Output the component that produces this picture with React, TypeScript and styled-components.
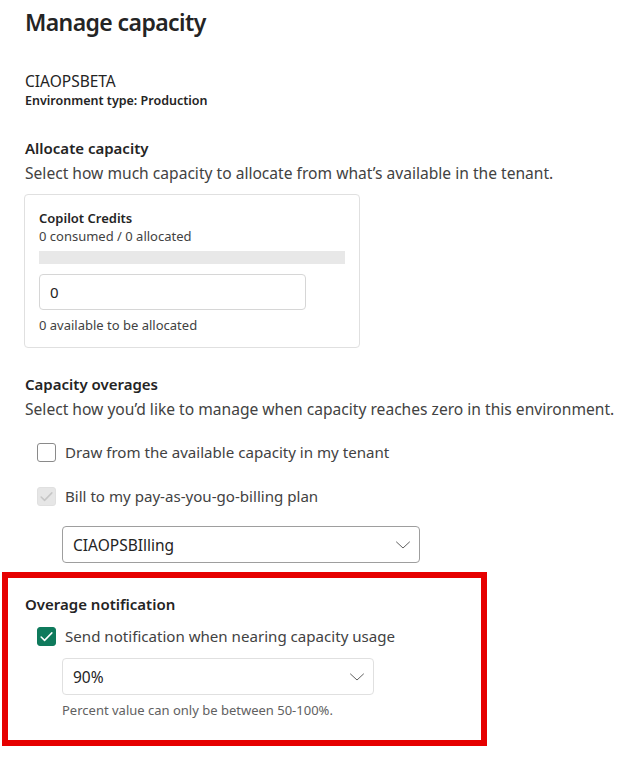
import React from 'react';
import styled, { createGlobalStyle } from 'styled-components';

const GlobalStyle = createGlobalStyle`
  * { box-sizing: border-box; }
  body {
    margin: 0;
    background: #ffffff;
    color: #242424;
    font-family: "Noto Sans", "Open Sans", sans-serif;
  }
`;

const Page = styled.main`
  width: 634px;
  padding: 6px 0 0 25px;
`;

const Title = styled.h1`
  margin: 0;
  font-size: 23px;
  font-weight: 600;
  letter-spacing: -0.6px;
  line-height: 32px;
`;

const EnvName = styled.div`
  margin-top: 33px;
  font-size: 15.5px;
  font-weight: 400;
  line-height: 20px;
`;

const EnvType = styled.div`
  margin-top: 1px;
  font-size: 12.5px;
  font-weight: 600;
  line-height: 18px;
`;

const SectionTitle = styled.h2<{ $gap: number }>`
  margin: ${(p) => p.$gap}px 0 0;
  font-size: 15px;
  font-weight: 600;
  line-height: 22px;
`;

const SectionText = styled.p`
  margin: 3px 0 0;
  font-size: 15.6px;
  line-height: 22px;
  color: #424242;
`;

const Card = styled.section`
  width: 336px;
  margin: 10px 0 0 -1px;
  padding: 14px 14px 13px 14px;
  border: 1px solid #e0e0e0;
  border-radius: 4px;
`;

const CardTitle = styled.div`
  font-size: 13px;
  font-weight: 600;
  line-height: 18px;
`;

const Muted = styled.div`
  font-size: 13px;
  line-height: 18px;
  color: #424242;
`;

const Bar = styled.div`
  margin-top: 6px;
  height: 13px;
  background: #e8e8e8;
`;

const NumberInput = styled.input`
  display: block;
  width: 267px;
  height: 36px;
  margin: 10px 0 6px;
  padding: 0 10px;
  border: 1px solid #d6d6d6;
  border-radius: 4px;
  font: inherit;
  font-size: 15px;
  color: #242424;
  outline: none;
`;

const Options = styled.div<{ $top: number }>`
  display: flex;
  flex-direction: column;
  gap: 24px;
  margin: ${(p) => p.$top}px 0 0 12px;
`;

const OptionRow = styled.label`
  display: flex;
  align-items: center;
  gap: 9px;
  font-size: 15.1px;
  line-height: 20px;
  color: #424242;
`;

type BoxState = 'empty' | 'disabled' | 'checked';

const Box = styled.span<{ $state: BoxState }>`
  flex: none;
  width: 19px;
  height: 19px;
  border-radius: 3px;
  display: flex;
  align-items: center;
  justify-content: center;
  border: 1px solid
    ${(p) => (p.$state === 'empty' ? '#8a8a8a' : p.$state === 'disabled' ? '#e0e0e0' : '#0f7a5c')};
  background: ${(p) => (p.$state === 'empty' ? '#fff' : p.$state === 'disabled' ? '#e6e6e6' : '#0f7a5c')};
  color: ${(p) => (p.$state === 'checked' ? '#fff' : '#c6c6c6')};
`;

const Select = styled.div<{ $width: number; $border: string }>`
  width: ${(p) => p.$width}px;
  height: 37px;
  display: flex;
  align-items: center;
  justify-content: space-between;
  padding: 0 8px 0 10px;
  border: 1px solid ${(p) => p.$border};
  border-radius: 4px;
  font-size: 15.5px;
  color: #242424;
`;

const Indented = styled.div<{ $top: number }>`
  margin: ${(p) => p.$top}px 0 0 37px;
`;

const Highlight = styled.section`
  width: 485px;
  height: 174px;
  margin: 9px 0 0 -23px;
  padding: 15px 0 0 17px;
  border: 6px solid #e60000;
`;

const Hint = styled.div`
  margin-top: 7px;
  font-size: 13px;
  line-height: 16px;
  color: #616161;
`;

const Check = () => (
  <svg width="15" height="15" viewBox="0 0 14 14" fill="none">
    <path d="M2 7.4l3.2 3.2L12 3.6" stroke="currentColor" strokeWidth="1.4" strokeLinecap="round" strokeLinejoin="round" />
  </svg>
);

const Chevron = () => (
  <svg width="16" height="16" viewBox="0 0 16 16" fill="none">
    <path d="M1.5 5L8 11l6.5-6" stroke="#616161" strokeWidth="1" strokeLinecap="round" strokeLinejoin="round" />
  </svg>
);

function Checkbox({ state, label }: { state: BoxState; label: string }) {
  return (
    <OptionRow>
      <Box $state={state}>{state !== 'empty' && <Check />}</Box>
      {label}
    </OptionRow>
  );
}

export default function App() {
  return (
    <>
      <GlobalStyle />
      <Page>
        <Title>Manage capacity</Title>
        <EnvName>CIAOPSBETA</EnvName>
        <EnvType>Environment type: Production</EnvType>

        <SectionTitle $gap={27}>Allocate capacity</SectionTitle>
        <SectionText>Select how much capacity to allocate from what’s available in the tenant.</SectionText>

        <Card>
          <CardTitle>Copilot Credits</CardTitle>
          <Muted>0 consumed / 0 allocated</Muted>
          <Bar />
          <NumberInput defaultValue="0" />
          <Muted>0 available to be allocated</Muted>
        </Card>

        <SectionTitle $gap={25}>Capacity overages</SectionTitle>
        <SectionText>Select how you’d like to manage when capacity reaches zero in this environment.</SectionText>

        <Options $top={22}>
          <Checkbox state="empty" label="Draw from the available capacity in my tenant" />
          <Checkbox state="disabled" label="Bill to my pay-as-you-go-billing plan" />
        </Options>

        <Indented $top={20}>
          <Select $width={358} $border="#9e9e9e">
            CIAOPSBIlling
            <Chevron />
          </Select>
        </Indented>

        <Highlight>
          <SectionTitle $gap={0}>Overage notification</SectionTitle>
          <Options $top={11}>
            <Checkbox state="checked" label="Send notification when nearing capacity usage" />
          </Options>
          <Indented $top={12}>
            <Select $width={312} $border="#e0e0e0">
              90%
              <Chevron />
            </Select>
            <Hint>Percent value can only be between 50-100%.</Hint>
          </Indented>
        </Highlight>
      </Page>
    </>
  );
}
